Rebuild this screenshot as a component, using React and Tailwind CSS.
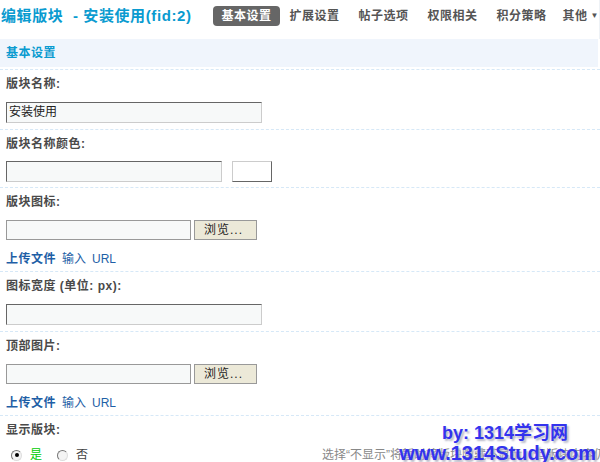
import React from 'react';

const font = { fontFamily: '"Liberation Sans", "Noto Sans CJK SC", sans-serif' };

const tabs = ['基本设置', '扩展设置', '帖子选项', '权限相关', '积分策略'];

function Label({ children }) {
  return (
    <div className="h-[18px] leading-[18px] text-[12px] font-bold text-[#4a4a4a] tracking-[0.5px]">{children}</div>
  );
}

function TextInput({ width, value }) {
  return (
    <div
      className={`${width} h-[21px] border border-t-[#666] border-l-[#666] border-b-[#ccc] border-r-[#ccc] bg-[#f7f9f9] px-[2px] text-[12px] leading-[19px] text-[#222]`}
    >
      {value}
    </div>
  );
}

function FileInput() {
  return (
    <div className="flex gap-[3px]">
      <div className="w-[185px] h-[20px] border border-[#999] bg-[#f7f9f9]" />
      <div className="w-[63px] h-[20px] border border-[#999] bg-[#ece9d8] text-[12px] leading-[18px] text-[#222] pl-[9px] tracking-[1px]">
        浏览...
      </div>
    </div>
  );
}

function UploadLinks() {
  return (
    <div className="mt-[10px] h-[18px] leading-[18px] text-[12px] text-[#1f5fa6] flex">
      <span className="font-bold tracking-[0.5px]">上传文件</span>
      <span className="ml-[6px]">输入</span>
      <span className="ml-[6px]">URL</span>
    </div>
  );
}

function Radio({ checked }) {
  return (
    <span className="shrink-0 w-[11px] h-[11px] rounded-full border border-t-[#777] border-l-[#777] border-b-[#ddd] border-r-[#ddd] bg-[#f4f4f4] flex items-center justify-center">
      {checked && <span className="w-[4px] h-[4px] rounded-full bg-black" />}
    </span>
  );
}

function Row({ children, pb = 'pb-[6px]' }) {
  return (
    <div className={`border-t border-dashed border-[#d6e8f7] px-[6px] pt-[5px] ${pb}`}>
      {children}
    </div>
  );
}

export default function App() {
  return (
    <div className="relative w-[600px] h-[462px] overflow-hidden bg-white" style={font}>
      <div className="h-[39px] flex items-start pt-[6px] pr-[2px] border-r border-[#eef2f6]">
        <div className="pl-[1px] h-[20px] leading-[20px] text-[15px] font-bold text-[#0a9bd0] whitespace-nowrap tracking-[0.6px]">
          编辑版块 &nbsp;- 安装使用(fid:2)
        </div>
        <div className="ml-auto flex items-center gap-[19px] text-[12px] font-bold text-[#555] whitespace-nowrap tracking-[0.5px]">
          {tabs.map((t, i) => (
            <div
              key={t}
              className={
                i === 0
                  ? 'h-[20px] leading-[20px] px-[8px] rounded-[4px] bg-[#666] text-white -mr-[9px]'
                  : 'h-[20px] leading-[20px]'
              }
            >
              {t}
            </div>
          ))}
          <div className="h-[20px] leading-[20px] flex items-center gap-[3px] -ml-[3px] -mr-[2px]">
            其他<span className="text-[8px]">▼</span>
          </div>
        </div>
      </div>

      <div className="h-[28px] leading-[28px] bg-[#f0f5fc] pl-[6px] text-[12px] font-bold text-[#0a9bd0] mr-[2px] tracking-[0.5px]">
        基本设置
      </div>

      <div className="mt-[2px]">
        <Row>
          <Label>版块名称:</Label>
          <div className="mt-[9px]">
            <TextInput width="w-[256px]" value="安装使用" />
          </div>
        </Row>
        <Row pb="pb-[5px]">
          <Label>版块名称颜色:</Label>
          <div className="mt-[8px] flex gap-[10px]">
            <TextInput width="w-[216px]" value="" />
            <div className="w-[40px] h-[21px] border border-t-[#ccc] border-l-[#ccc] border-b-[#666] border-r-[#666] bg-white" />
          </div>
        </Row>
        <Row pb="pb-[3px]">
          <Label>版块图标:</Label>
          <div className="mt-[9px]">
            <FileInput />
          </div>
          <UploadLinks />
        </Row>
        <Row>
          <Label>图标宽度 (单位: px):</Label>
          <div className="mt-[9px]">
            <TextInput width="w-[256px]" value="" />
          </div>
        </Row>
        <Row pb="pb-[3px]">
          <Label>顶部图片:</Label>
          <div className="mt-[9px]">
            <FileInput />
          </div>
          <UploadLinks />
        </Row>
        <Row pb="pb-0">
          <Label>显示版块:</Label>
          <div className="mt-[8px] h-[16px] flex items-center text-[12px] whitespace-nowrap">
            <span className="ml-[5px]" />
            <Radio checked />
            <span className="ml-[8px] text-[#00cc00]">是</span>
            <span className="ml-[15px]" />
            <Radio />
            <span className="ml-[8px] text-[#444]">否</span>
            <span className="ml-[234px] text-[#888]">选择“不显示”将暂时将版块隐藏不显示，但版块内容仍将保留</span>
          </div>
        </Row>
      </div>

      <div
        className="absolute right-[32px] top-[423px] text-[18px] font-bold text-[#3333ee] leading-[20px] whitespace-nowrap"
        style={{ textShadow: '2px 2px 2px #b8b8c8' }}
      >
        by: 1314学习网
      </div>
      <div
        className="absolute right-[4px] top-[442px] text-[20px] font-bold text-[#3333ee] leading-[22px] whitespace-nowrap"
        style={{ textShadow: '2px 2px 2px #b8b8c8' }}
      >
        www.1314Study.com
      </div>
    </div>
  );
}
